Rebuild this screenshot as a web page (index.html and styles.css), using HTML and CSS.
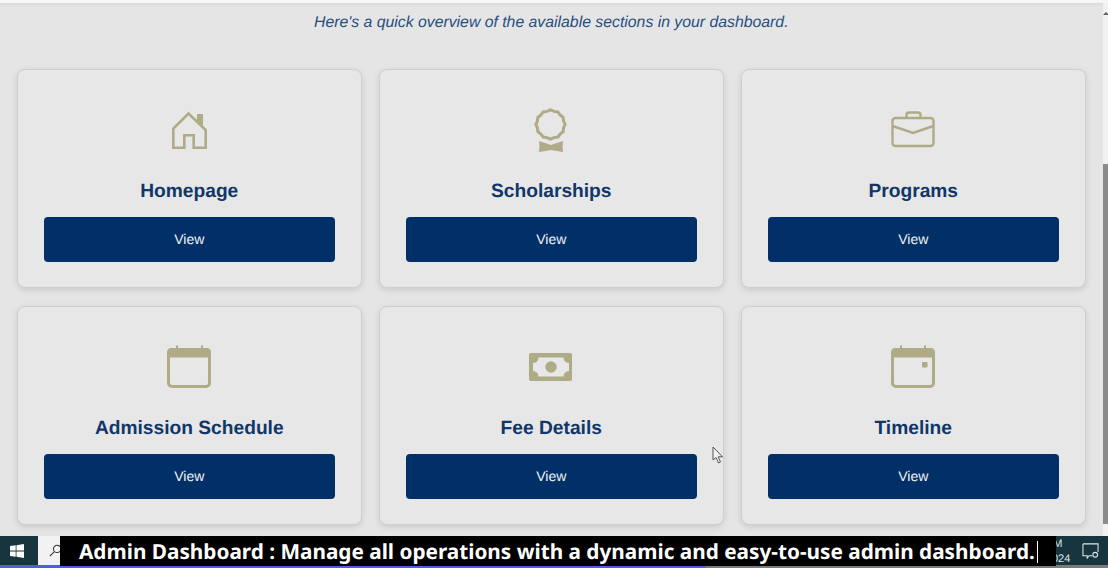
FILE: index.html
```html
<!DOCTYPE html>
<html lang="en">
<head>
    <meta charset="UTF-8">
    <meta name="viewport" content="width=device-width, initial-scale=1.0">
    <title>Admin Dashboard</title>
    <link rel="stylesheet" href="styles.css">
</head>
<body>
    <div class="browser-strip"></div>

    <div class="viewport">
        <main class="content">
            <p class="intro">Here's a quick overview of the available sections in your dashboard.</p>

            <section class="card-grid">
                <article class="card">
                    <svg class="card-icon" viewBox="0 0 48 48" fill="none" stroke="currentColor" stroke-width="2.6">
                        <path d="M8.300 41.700V22.500L23.500 7.500 40.700 24V41.700H28.700V29.300H19.300V41.700Z"/>
                        <path d="M32 11V8H38V20L32 14.500Z" fill="currentColor" stroke="none"/>
                    </svg>
                    <h2 class="card-title">Homepage</h2>
                    <a class="view-btn">View</a>
                </article>

                <article class="card">
                    <svg class="card-icon" viewBox="0 0 48 48" fill="none" stroke="currentColor" stroke-width="3">
                        <path d="M23.500 3.900L27 5.400 30.800 5.900 33.100 8.900 36.100 11.200 36.600 15 38.100 18.500 36.600 22 36.100 25.800 33.100 28.100 30.800 31.100 27 31.600 23.500 33.100 20 31.600 16.200 31.100 13.900 28.100 10.900 25.800 10.400 22 8.900 18.500 10.400 15 10.900 11.200 13.900 8.900 16.200 5.900 20 5.400Z"/>
                        <path d="M12 35L24 39 36 35 35.500 40.500 36 46 24 44 12 46 12.500 40.500Z" fill="currentColor" stroke="none"/>
                    </svg>
                    <h2 class="card-title">Scholarships</h2>
                    <a class="view-btn">View</a>
                </article>

                <article class="card">
                    <svg class="card-icon" viewBox="0 0 48 48" fill="none" stroke="currentColor" stroke-width="2.4">
                        <rect x="3.500" y="12" width="41" height="28" rx="3"/>
                        <path d="M17.500 12V9Q17.500 6.500 20 6.500H29Q31.500 6.500 31.500 9V12"/>
                        <path d="M3.500 20L24 27 44.500 20"/>
                    </svg>
                    <h2 class="card-title">Programs</h2>
                    <a class="view-btn">View</a>
                </article>

                <article class="card">
                    <svg class="card-icon" viewBox="0 0 48 48" fill="none" stroke="currentColor" stroke-width="3">
                        <rect x="3.500" y="6.500" width="41" height="37" rx="3.500"/>
                        <path d="M3.500 10Q3.500 6.500 7 6.500H41Q44.500 6.500 44.500 10V13H3.500Z" fill="currentColor"/>
                        <path d="M12 2.500V6M37 2.500V6" stroke-width="2"/>
                    </svg>
                    <h2 class="card-title">Admission Schedule</h2>
                    <a class="view-btn">View</a>
                </article>

                <article class="card">
                    <svg class="card-icon" viewBox="0 0 48 48" fill="currentColor">
                        <path fill-rule="evenodd" d="M4 10H43Q45 10 45 12V36Q45 38 43 38H4Q2 38 2 36V12Q2 10 4 10ZM11.500 14.500A5.500 5.500 0 0 1 6 20V28A5.500 5.500 0 0 1 11.500 33.500H36.500A5.500 5.500 0 0 1 42 28V20A5.500 5.500 0 0 1 36.500 14.500Z"/>
                        <circle cx="24" cy="24" r="5.700"/>
                    </svg>
                    <h2 class="card-title">Fee Details</h2>
                    <a class="view-btn">View</a>
                </article>

                <article class="card">
                    <svg class="card-icon" viewBox="0 0 48 48" fill="none" stroke="currentColor" stroke-width="3">
                        <rect x="3.500" y="6.500" width="41" height="37" rx="3.500"/>
                        <path d="M3.500 10Q3.500 6.500 7 6.500H41Q44.500 6.500 44.500 10V13H3.500Z" fill="currentColor"/>
                        <path d="M12 2.500V6M36 2.500V6" stroke-width="2"/>
                        <rect x="33" y="19" width="5.500" height="5.500" rx="1" fill="currentColor" stroke="none"/>
                    </svg>
                    <h2 class="card-title">Timeline</h2>
                    <a class="view-btn">View</a>
                </article>
            </section>
        </main>

        <div class="scrollbar">
            <span class="scroll-arrow"></span>
            <span class="scroll-thumb"></span>
        </div>
    </div>

    <footer class="taskbar">
        <span class="start-btn">
            <svg class="win-logo" viewBox="0 0 16 16" fill="currentColor">
                <path d="M0 2.300L6.500 1.400V7.500H0ZM7.400 1.300L16 0V7.500H7.400ZM0 8.500H6.500V14.600L0 13.700ZM7.400 8.500H16V16L7.400 14.700Z"/>
            </svg>
        </span>
        <span class="search-box">
            <svg class="search-icon" viewBox="0 0 16 16" fill="none" stroke="currentColor" stroke-width="1.3">
                <circle cx="10" cy="6" r="4.500"/>
                <path d="M6.700 9.300L1 15"/>
            </svg>
        </span>
        <span class="tray">
            <span class="clock">
                <span class="clock-time">M</span>
                <span>024</span>
            </span>
            <svg class="notify-icon" viewBox="0 0 18 18" fill="none" stroke="currentColor" stroke-width="1.1">
                <path d="M1 2H17V10.500M11 14.500H7.500L5.500 17V14.500H1V2"/>
                <circle cx="14" cy="13.500" r="2.500"/>
            </svg>
        </span>
    </footer>
    <div class="progress"></div>

    <div class="caption">Admin Dashboard : Manage all operations with a dynamic and easy-to-use admin dashboard.<span class="caret"></span></div>

    <svg class="cursor" viewBox="0 0 12 18" fill="#f2f2f2" stroke="#555" stroke-width="1">
        <path d="M1 1V14L4 11.500 6.500 17 8.500 16 6.200 10.800H10.500Z"/>
    </svg>
</body>
</html>
```

FILE: styles.css
```css
/* page */
html, body {
    height: 100%;
}
body {
    margin: 0;
    height: 568px;
    overflow: hidden;
    display: flex;
    flex-direction: column;
    font-family: "Liberation Sans", Arial, sans-serif;
    text-rendering: geometricPrecision;
    background-color: #e6e6e6;
}

.browser-strip {
    height: 3px;
    background-color: #f6f6f6;
}

.viewport {
    flex: 1;
    display: flex;
    min-height: 0;
}

/* main content */
.content {
    flex: 1;
    padding: 0 17px;
    background-color: #e5e5e5;
    box-shadow: inset 0 5px 5px -4px #d4d4d4;
}
.intro {
    margin: 11px 0 37px;
    height: 18px;
    font-size: 15.8px;
    line-height: 18px;
    font-style: italic;
    text-align: center;
    color: #28507f;
}

.card-grid {
    display: grid;
    grid-template-columns: repeat(3, 344.5px);
    grid-auto-rows: 219px;
    gap: 18px 17.5px;
}
.card {
    display: flex;
    flex-direction: column;
    align-items: center;
    padding: 36px 26px 0;
    box-sizing: border-box;
    background-color: #e7e7e7;
    border: 1px solid #cfcfcf;
    border-radius: 8px;
    box-shadow: 0 2px 6px rgba(0, 0, 0, 0.12);
}
.card-icon {
    width: 48px;
    height: 48px;
    color: #aeab86;
}
.card-title {
    margin: 26px 0 13px;
    font-size: 19.2px;
    line-height: 24px;
    font-weight: bold;
    color: #113668;
}
.view-btn {
    align-self: stretch;
    height: 45px;
    line-height: 45px;
    text-align: center;
    font-size: 14px;
    color: #f2f2f2;
    background-color: #003067;
    border-radius: 4px;
}

/* scrollbar */
.scrollbar {
    width: 6px;
    display: flex;
    flex-direction: column;
    align-items: center;
    background-color: #f1f1f1;
}
.scroll-arrow {
    margin-top: 9px;
    border-left: 3px solid transparent;
    border-right: 3px solid transparent;
    border-bottom: 3px solid #606060;
}
.scroll-thumb {
    margin-top: 149px;
    flex: 1;
    align-self: stretch;
    margin-bottom: 12px;
    background-color: #8a8a8a;
}

/* taskbar */
.taskbar {
    height: 29px;
    display: flex;
    background-color: #17353f;
}
.start-btn {
    width: 38px;
    padding-right: 4px;
    box-sizing: border-box;
    display: flex;
    align-items: center;
    justify-content: center;
    color: #fff;
}
.win-logo {
    width: 14px;
    height: 14px;
}
.search-box {
    width: 22px;
    padding-left: 11px;
    box-sizing: border-box;
    display: flex;
    align-items: center;
    background-color: #f2f2f2;
    color: #333;
    overflow: hidden;
}
.search-icon {
    width: 13px;
    height: 13px;
    flex: none;
}
.tray {
    margin-left: auto;
    width: 56px;
    display: flex;
    align-items: center;
    justify-content: space-between;
    box-sizing: border-box;
    padding-right: 9px;
    color: #dfe7ea;
}
.clock {
    display: flex;
    flex-direction: column;
    padding-top: 3px;
    font-size: 11px;
    line-height: 15px;
}
.clock-time {
    text-align: right;
    padding-right: 8px;
}
.notify-icon {
    width: 17px;
    height: 17px;
}
.progress {
    height: 3px;
    background: linear-gradient(to right, #4c5fe0 0 706px, #7b7b7b 706px);
}

/* overlay caption of the video */
.caption {
    position: absolute;
    left: 60px;
    top: 536px;
    width: 996px;
    height: 30px;
    padding: 1px 0 0 19px;
    box-sizing: border-box;
    display: flex;
    align-items: center;
    white-space: nowrap;
    font-family: "Noto Sans", "Open Sans", sans-serif;
    font-size: 20.75px;
    font-weight: bold;
    color: #fff;
    background-color: #000;
}
.caret {
    width: 1px;
    height: 22px;
    margin-left: 2px;
    background-color: #fff;
}

.cursor {
    position: absolute;
    left: 712px;
    top: 446px;
    width: 12px;
    height: 18px;
}
```
